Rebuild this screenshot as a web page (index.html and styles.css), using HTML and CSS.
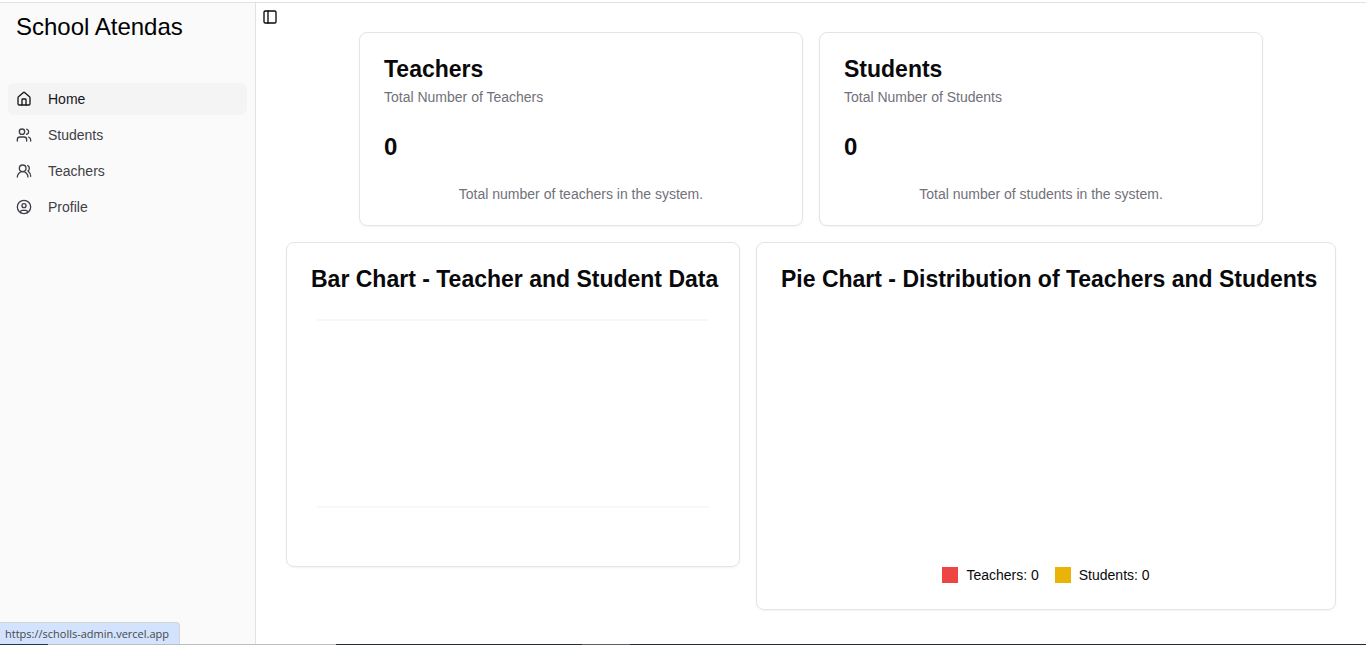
FILE: index.html
```html
<!DOCTYPE html>
<html lang="en">
    <head>
        <meta charset="UTF-8">
        <title>School Atendas</title>
        <link rel="stylesheet" href="styles.css">
    </head>
    <body>
        <div class="layout">
            <aside class="sidebar">
                <h1 class="brand">School Atendas</h1>
                <nav class="menu">
                    <a class="menu-item active" href="#">
                        <svg class="icon" viewBox="0 0 24 24"><path d="M15 21v-8a1 1 0 0 0-1-1h-4a1 1 0 0 0-1 1v8"/><path d="M3 10a2 2 0 0 1 .709-1.528l7-5.999a2 2 0 0 1 2.582 0l7 5.999A2 2 0 0 1 21 10v9a2 2 0 0 1-2 2H5a2 2 0 0 1-2-2z"/></svg>
                        Home
                    </a>
                    <a class="menu-item" href="#">
                        <svg class="icon" viewBox="0 0 24 24"><path d="M16 21v-2a4 4 0 0 0-4-4H6a4 4 0 0 0-4 4v2"/><circle cx="9" cy="7" r="4"/><path d="M22 21v-2a4 4 0 0 0-3-3.87"/><path d="M16 3.13a4 4 0 0 1 0 7.75"/></svg>
                        Students
                    </a>
                    <a class="menu-item" href="#">
                        <svg class="icon" viewBox="0 0 24 24"><path d="M18 21a8 8 0 0 0-16 0"/><circle cx="10" cy="8" r="5"/><path d="M22 20c0-3.37-2-6.5-4-8a5 5 0 0 0-.45-8.3"/></svg>
                        Teachers
                    </a>
                    <a class="menu-item" href="#">
                        <svg class="icon" viewBox="0 0 24 24"><circle cx="12" cy="12" r="10"/><circle cx="12" cy="10" r="3"/><path d="M7 20.662V19a2 2 0 0 1 2-2h6a2 2 0 0 1 2 2v1.662"/></svg>
                        Profile
                    </a>
                </nav>
            </aside>

            <main class="content">
                <button class="toggle" aria-label="Toggle Sidebar">
                    <svg class="icon" viewBox="0 0 24 24"><rect width="18" height="18" x="3" y="3" rx="2"/><path d="M9 3v18"/></svg>
                </button>

                <div class="stats">
                    <section class="card">
                        <h2 class="card-title">Teachers</h2>
                        <p class="card-text">Total Number of Teachers</p>
                        <p class="count">0</p>
                        <p class="card-footer">Total number of teachers in the system.</p>
                    </section>
                    <section class="card">
                        <h2 class="card-title">Students</h2>
                        <p class="card-text">Total Number of Students</p>
                        <p class="count">0</p>
                        <p class="card-footer">Total number of students in the system.</p>
                    </section>
                </div>

                <div class="charts">
                    <section class="card">
                        <h2 class="card-title">Bar Chart - Teacher and Student Data</h2>
                        <div class="bar-chart">
                            <div class="plot"></div>
                        </div>
                    </section>
                    <section class="card">
                        <h2 class="card-title">Pie Chart - Distribution of Teachers and Students</h2>
                        <div class="pie-chart"></div>
                        <ul class="legend">
                            <li><span class="swatch red"></span>Teachers: 0</li>
                            <li><span class="swatch yellow"></span>Students: 0</li>
                        </ul>
                    </section>
                </div>
            </main>
        </div>

        <div class="status">https://scholls-admin.vercel.app</div>
        <div class="taskbar-edge"></div>
    </body>
</html>
```

FILE: styles.css
```css
*{
    box-sizing: border-box;
    margin: 0;
    padding: 0;
}
body{
    padding-top: 2px;
    background-color: white;
    color: #09090b;
    font-family: "Liberation Sans", Arial, sans-serif;
    font-size: 14px;
    line-height: 20px;
}
.layout{
    display: flex;
    min-height: calc(100vh - 2px);
    border-top: 1px solid #e2e2e2;
}

/* sidebar */
.sidebar{
    width: 256px;
    flex-shrink: 0;
    padding: 8px;
    background-color: #fafafa;
    border-right: 1px solid #e2e2e5;
}
.brand{
    padding: 0 8px;
    color: black;
    font-size: 24px;
    font-weight: normal;
    line-height: 32px;
}
.menu{
    display: flex;
    flex-direction: column;
    gap: 4px;
    margin-top: 40px;
}
.menu-item{
    display: flex;
    align-items: center;
    gap: 16px;
    height: 32px;
    padding: 0 8px;
    border-radius: 6px;
    color: #3f3f46;
    text-decoration: none;
}
.menu-item.active{
    background-color: #f4f4f5;
    color: #18181b;
}
.icon{
    width: 16px;
    height: 16px;
    fill: none;
    stroke: currentColor;
    stroke-width: 2;
    stroke-linecap: round;
    stroke-linejoin: round;
}

/* main area */
.content{
    flex: 1;
    min-width: 0;
}
.toggle{
    display: flex;
    align-items: center;
    justify-content: center;
    width: 28px;
    height: 28px;
    border: none;
    background-color: transparent;
    color: #09090b;
    cursor: pointer;
}
.stats,
.charts{
    display: grid;
    gap: 16px;
    margin: 0 auto;
}
.stats{
    grid-template-columns: 1fr 1fr;
    max-width: 904px;
    margin-top: 1px;
}
.charts{
    grid-template-columns: minmax(0, 454fr) minmax(0, 580fr);
    align-items: start;
    max-width: 1050px;
    margin-top: 16px;
}
.card{
    padding: 24px;
    border: 1px solid #e4e4e7;
    border-radius: 8px;
    box-shadow: 0 1px 2px rgba(0,0,0,0.05);
}
.card-title{
    font-size: 23px;
    line-height: 24px;
    white-space: nowrap;
}
.card-text{
    margin-top: 6px;
    color: #71717a;
}
.count{
    margin-top: 24px;
    font-size: 24px;
    font-weight: bold;
    line-height: 32px;
}
.card-footer{
    margin-top: 24px;
    color: #71717a;
    line-height: 14px;
    text-align: center;
}

/* charts */
.bar-chart{
    display: flex;
    aspect-ratio: 16 / 9;
    margin-top: 24px;
    padding: 4px 6px 34px;
}
.plot{
    flex: 1;
    border-top: 2px solid #f8f8f8;
    border-bottom: 2px solid #f8f8f8;
}
.pie-chart{
    height: 250px;
    margin-top: 24px;
}
.legend{
    display: flex;
    justify-content: center;
    gap: 16px;
    list-style: none;
}
.legend li{
    display: flex;
    align-items: center;
    gap: 8px;
}
.swatch{
    width: 16px;
    height: 16px;
}
.red{
    background-color: #ef4444;
}
.yellow{
    background-color: #eab308;
}

/* link preview in the corner */
.status{
    position: fixed;
    left: 0;
    bottom: 1px;
    padding: 3px 10px 2px 5px;
    border-top: 1px solid #d5d5d5;
    border-right: 1px solid #d5d5d5;
    border-top-right-radius: 4px;
    background-color: #d3e3fd;
    color: #474747;
    font-family: "Open Sans", "Noto Sans", sans-serif;
    font-size: 11px;
    line-height: 16px;
}
.taskbar-edge{
    position: fixed;
    left: 0;
    right: 0;
    bottom: 0;
    height: 1px;
    background: linear-gradient(to right, #1f3a44 48px, #bdbdbd 48px, #bdbdbd 336px, #1f2d3d 336px, #1f2d3d 582px, #5a6268 582px, #5a6268 630px, #1f2d3d 630px);
}
```
